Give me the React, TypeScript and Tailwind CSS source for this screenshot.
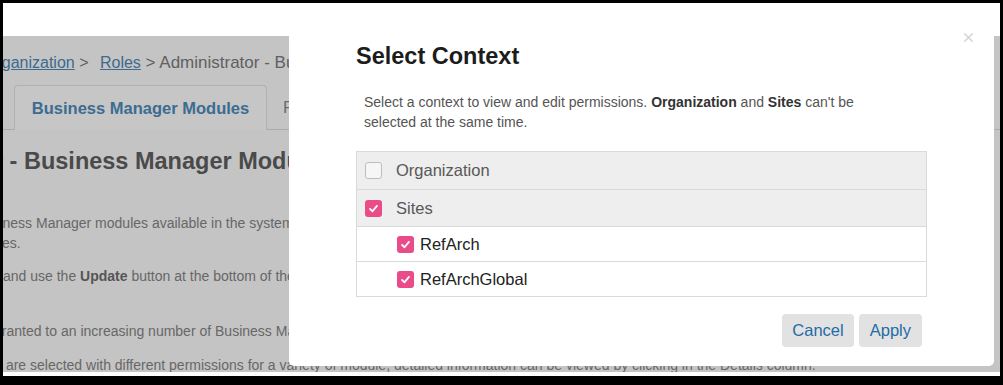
import { X } from 'lucide-react';

const FONT = "font-['Liberation_Sans',Arial,sans-serif]";

function Checkbox({ checked }: { checked: boolean }) {
  if (!checked) {
    return <div className="h-[17px] w-[17px] shrink-0 rounded-[3px] border-[1.5px] border-[#bdbdbd] bg-[#f6f6f6]" />;
  }
  return (
    <div className="flex h-[17px] w-[17px] shrink-0 items-center justify-center rounded-[3px] bg-[#ea4c89]">
      <svg width="11" height="11" viewBox="0 0 12 12" fill="none">
        <path d="M2.2 6.4 4.9 9 9.8 3.2" stroke="#fff" strokeWidth="2" strokeLinecap="round" strokeLinejoin="round" />
      </svg>
    </div>
  );
}

const ROWS = [
  { label: 'Organization', checked: false, child: false },
  { label: 'Sites', checked: true, child: false },
  { label: 'RefArch', checked: true, child: true },
  { label: 'RefArchGlobal', checked: true, child: true },
];

// dimmed page behind the dialog
function BackgroundPage() {
  return (
    <div className="h-[336px] overflow-hidden bg-[#c4c4c4] pt-[17px] text-[#606060]">
      {/* Breadcrumb */}
      <div className="ml-[-19px] whitespace-nowrap text-[16px] leading-[20px]">
        <span className="text-[#3d6a8d] underline">Organization</span>
        <span> &gt; </span>
        <span className="ml-[7px] text-[#3d6a8d] underline">Roles</span>
        <span className="text-[17px]"> &gt; Administrator - Business Manager Modules</span>
      </div>

      {/* Tabs */}
      <div className="mt-[12px] flex h-[45px] border-b border-[#ababab] pl-[11px]">
        <div className="-mb-px flex w-[253px] items-center justify-center rounded-t-[4px] border border-b-0 border-[#b1b1b1] bg-[#c6c6c6] text-[16.5px] font-bold text-[#3b6c91]">
          Business Manager Modules
        </div>
        <div className="flex items-center pl-[16px] text-[16.5px] text-[#6a6a6a]">Permissions</div>
      </div>

      {/* Heading */}
      <div className="mt-[17px] ml-[-154px] whitespace-nowrap text-[23.5px] font-bold leading-[28px] text-[#4a4a4a]">
        Administrator - Business Manager Modules
      </div>

      {/* Text */}
      <div className="whitespace-nowrap text-[14px] leading-[20px] text-[#676767]">
        <div className="mt-[38px] ml-[-139px]">
          This page lists all Business Manager modules available in the system and the permissions granted to this role for each of them and its subsites.
        </div>
        <div className="ml-[-15px]">sites.</div>
        <div className="mt-[13px]">
          and use the <b className="text-[#555]">Update</b> button at the bottom of the page to save your changes to the module permissions and labels.
        </div>
        <div className="mt-[35px] ml-[-9px]">
          granted to an increasing number of Business Manager modules, see the tooltip for a given role.
        </div>
        <div className="mt-[14px] ml-[-8px]">
          s are selected with different permissions for a variety of module, detailed information can be viewed by clicking in the Details column.
        </div>
      </div>
    </div>
  );
}

export default function App() {
  return (
    <div className={`h-[385px] w-[1003px] bg-black pt-[3px] pr-[3px] pb-[9px] pl-[3px] ${FONT}`}>
      <div className="relative h-full w-full overflow-hidden bg-white">
        <div className="h-[33px]" />
        <BackgroundPage />

        {/* Dialog */}
        <div className="absolute top-0 left-[286px] flex h-[363px] w-[705px] flex-col rounded-b-[5px] bg-white px-[67px] pt-[39px]">
          <X className="absolute top-[27px] right-[18px] text-[#d6d6d6]" size={15} strokeWidth={2.5} />

          <h2 className="text-[23.5px] font-bold leading-[28px] text-[#1c1c1c]">Select Context</h2>

          <p className="mt-[22px] ml-[8px] whitespace-nowrap text-[14px] leading-[20px] text-[#555]">
            Select a context to view and edit permissions. <b className="text-[#333]">Organization</b> and{' '}
            <b className="text-[#333]">Sites</b> can't be
            <br />
            selected at the same time.
          </p>

          <div className="mt-[19px] border border-[#dadada]">
            {ROWS.map((row, i) => (
              <div
                key={row.label}
                className={`flex items-center ${i > 0 ? 'border-t border-[#dadada]' : ''} ${
                  row.child ? 'h-[35px] bg-white pl-[40px] gap-[6px] text-[#222]' : 'h-[37px] bg-[#eeeeee] pl-[8px] gap-[14px] text-[#585858]'
                }`}
              >
                <Checkbox checked={row.checked} />
                <span className="text-[16.5px]">{row.label}</span>
              </div>
            ))}
          </div>

          <div className="mt-[17px] flex justify-end gap-[5px] pr-[5px]">
            <button className="h-[33px] rounded-[4px] bg-[#e2e2e2] px-[10px] text-[16.5px] text-[#1f6ca6]">Cancel</button>
            <button className="h-[33px] rounded-[4px] bg-[#e2e2e2] px-[11px] text-[16.5px] text-[#1f6ca6]">Apply</button>
          </div>
        </div>
      </div>
    </div>
  );
}
